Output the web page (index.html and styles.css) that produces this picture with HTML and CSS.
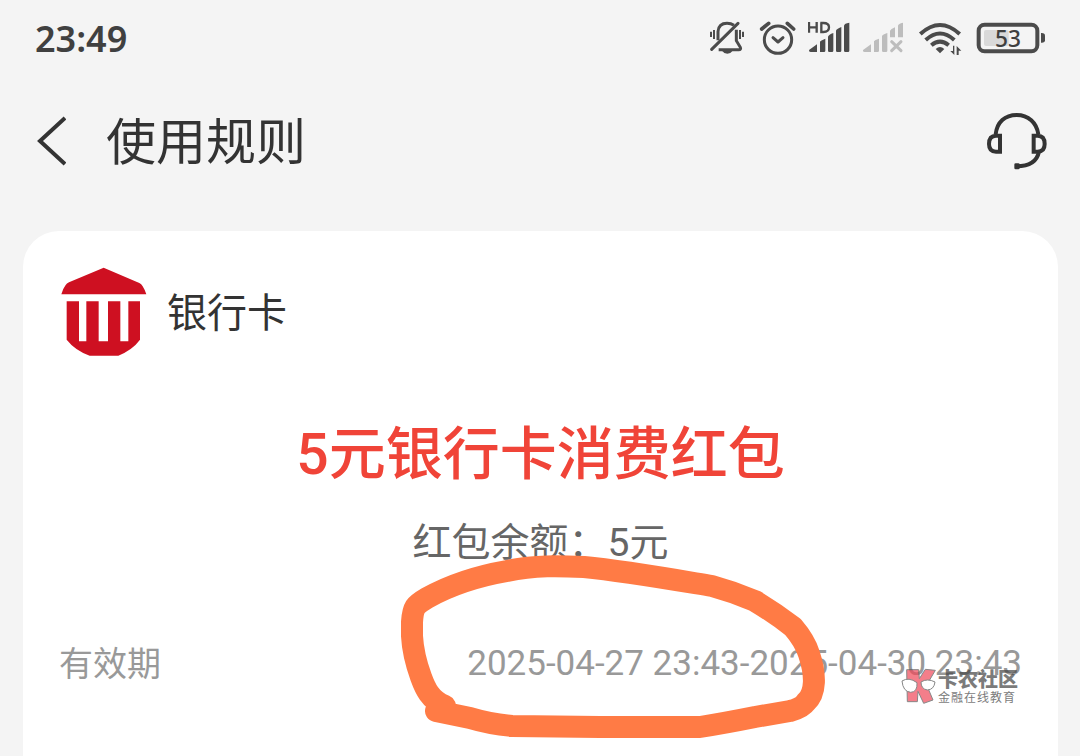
FILE: index.html
```html
<!DOCTYPE html>
<html lang="zh-CN">
<head>
    <meta charset="UTF-8">
    <meta name="viewport" content="width=device-width, initial-scale=1.0">
    <title>使用规则</title>
    <link rel="stylesheet" href="styles.css">
</head>
<body>
    <div class="status-bar">
        <span class="time">23:49</span>
        <div class="status-icons">
            <!-- Muted bell -->
            <svg width="36" height="34" viewBox="30 34 108 102" fill="none" stroke="#4b4b4b" stroke-width="9">
                <path d="M54 92V66Q56 41 81 41Q93 41 102 47M109 60V93L121 113Q124 120 116 120H56"/>
                <path d="M35 119L114 41" stroke-width="9" stroke-linecap="round"/>
                <path d="M33 66V82M42 61V88M120 61V88M129 66V82" stroke-width="6"/>
                <path d="M66 123H98Q92 132 82 132Q72 132 66 123Z" fill="#4b4b4b" stroke="none"/>
            </svg>
            <!-- Alarm -->
            <svg width="38" height="34" viewBox="174 33 114 102" fill="none" stroke="#4b4b4b" stroke-width="9" stroke-linecap="round" stroke-linejoin="round">
                <circle cx="234" cy="89" r="41"/>
                <path d="M219 83L234 96L249 83"/>
                <path d="M185 57L206 40M281 57L262 40" stroke-width="11"/>
            </svg>
            <!-- Signal -->
            <svg width="43" height="34" viewBox="324 33 129 102" fill="#4b4b4b">
                <path d="M327 120L351 103V126H332Q326 126 327 120ZM360 95Q361 92 376 86V122Q376 126 372 126H360ZM384 80Q386 74 400 69V122Q400 126 396 126H388Q384 126 384 122ZM408 62Q409 57 424 51V122Q424 126 420 126H412Q408 126 408 122ZM432 47Q433 40 448 38V122Q448 126 444 126H436Q432 126 432 122Z"/>
                <path d="M327 36V68M350 36V68M327 52H350M364 38V66H370Q387 66 387 52Q387 39 370 39H361" fill="none" stroke="#4b4b4b" stroke-width="7"/>
            </svg>
            <!-- No signal -->
            <svg width="42" height="34" viewBox="9 33 126 102" fill="#bdbdbd">
                <path d="M9 120L33 103V126H14Q8 126 9 120ZM42 94Q44 90 57 86V122Q57 126 53 126H42ZM66 78Q68 74 82 69V122Q82 126 78 126H70Q66 126 66 122ZM90 62Q92 57 105 52V82H90ZM114 47Q115 41 129 38V82H114Z"/>
                <path d="M95 95L123 122M123 95L95 122" stroke="#bdbdbd" stroke-width="9" stroke-linecap="round"/>
            </svg>
            <!-- Wifi -->
            <svg width="46" height="34" viewBox="171 33 138 102" fill="none" stroke="#4b4b4b" stroke-width="12">
                <path d="M181 72Q240 18 299 72M197 90Q240 51 283 90M214 106Q240 84 266 106"/>
                <path d="M227 117Q240 105 253 117L240 130Z" fill="#4b4b4b" stroke="none"/>
                <path d="M283 107V135L271 123H279V107ZM290 137V108L304 122H296V137Z" fill="#4b4b4b" stroke="none"/>
            </svg>
            <!-- Battery -->
            <svg width="70" height="34" viewBox="345 33 210 102">
                <rect x="356" y="44" width="176" height="80" rx="18" fill="none" stroke="#4b4b4b" stroke-width="12"/>
                <rect x="372" y="60" width="74" height="48" rx="6" fill="#d9d9d9"/>
                <path d="M543 69Q555 68 555 77V91Q555 99 543 98Z" fill="#4b4b4b"/>
                <text class="battery-level" x="444" y="110" text-anchor="middle">53</text>
            </svg>
        </div>
    </div>

    <header class="nav-bar">
        <button class="icon-button" aria-label="返回">
            <svg width="30" height="50" viewBox="0 0 30 50" fill="none" stroke="#333" stroke-width="4">
                <path d="M29 2L4 25L29 48"/>
            </svg>
        </button>
        <h1>使用规则</h1>
        <button class="icon-button" aria-label="客服">
            <svg width="60" height="58" viewBox="52 38 180 174" fill="none" stroke="#333" stroke-width="12">
                <path d="M78 105C82 68 106 47 141 47C176 47 201 70 206 105"/>
                <path d="M91 109V157H79Q58 157 58 134Q58 109 79 109ZM192 109V157H204Q225 157 225 134Q225 109 204 109Z"/>
                <path d="M208 157Q199 202 138 201"/>
                <rect x="134" y="192" width="16" height="18" rx="4" fill="#333" stroke="none"/>
            </svg>
        </button>
    </header>

    <main class="card">
        <div class="brand">
            <svg width="86" height="90" viewBox="64 52 258 270" fill="#ce1021">
                <path d="M192 54L299 100Q305 103 309 110Q316 121 320 134H65Q69 118 78 106Q81 101 88 98Z"/>
                <path d="M81 155H118V275H140V155H177V275H205V155H242V275H266V155H301V270Q279 300 236 318H150Q106 302 81 270Z"/>
            </svg>
            <span>银行卡</span>
        </div>
        <h2>5元银行卡消费红包</h2>
        <p class="balance">红包余额：5元</p>
        <dl class="validity">
            <dt>有效期</dt>
            <dd>2025-04-27 23:43-2025-04-30 23:43</dd>
        </dl>

        <!-- Hand-drawn ring round the start date -->
        <svg class="ring" width="426" height="184" viewBox="400 555 426 184" fill="none" stroke="#ff7b45" stroke-width="22" stroke-linecap="round" stroke-linejoin="round">
            <path d="M445 706C430 700 425 688 421 677Q413 655 412 636V622C413 607 415 605 427 598Q461 579 507 571C535 565 560 566 584 567C625 571 670 579 712 586Q734 592 755 601Q775 613 793 627Q805 641 809 654C816 675 816 693 806 702Q802 708 790 711L755 717Q725 723 700 727H600L512 726Q490 724 470 718L436 711"/>
        </svg>

        <div class="watermark">
            <svg width="36" height="36" viewBox="59 86 108 108">
                <path d="M76 91H112L114 118L132 90L162 93L136 137L155 182L127 192L110 156L108 187H78Z" fill="#f0485a" stroke="#555" stroke-width="3"/>
                <path d="M62 125Q82 112 107 130Q109 158 88 159Q65 157 62 125ZM119 128Q138 116 161 128Q158 151 138 152Q119 149 119 128Z" fill="#fff" stroke="#555" stroke-width="3"/>
            </svg>
            <div>
                <strong>卡农社区</strong>
                <small>金融在线教育</small>
            </div>
        </div>
    </main>
</body>
</html>
```

FILE: styles.css
```css
* {
    margin: 0;
    padding: 0;
    box-sizing: border-box;
}

body {
    background: #f4f4f4;
    color: #333;
    min-height: 100vh;
    display: flex;
    flex-direction: column;
    overflow-x: hidden;
    font-family: Roboto, "Noto Sans CJK SC", sans-serif;
}

.status-bar {
    display: flex;
    align-items: center;
    justify-content: space-between;
    height: 76px;
    padding: 0 35px;
}

.time {
    font-family: "Noto Sans", sans-serif;
    font-size: 36px;
    font-weight: 600;
    color: #404040;
}

.status-icons {
    display: flex;
    align-items: center;
    gap: 12px;
}

.battery-level {
    font-family: "Noto Sans", sans-serif;
    font-size: 68px;
    font-weight: 500;
    fill: #404040;
}

.nav-bar {
    display: flex;
    align-items: center;
    height: 130px;
    padding: 0 33px 0 36px;
}

.nav-bar h1 {
    flex: 1;
    margin-left: 40px;
    padding-top: 4px;
    font-size: 50px;
    line-height: 60px;
    font-weight: 400;
}

.icon-button {
    display: flex;
    border: none;
    background: none;
    cursor: pointer;
}

.card {
    position: relative;
    flex: 1;
    margin: 25px 22px 0 23px;
    padding: 36px;
    background: #fff;
    border-radius: 36px 36px 0 0;
}

.brand {
    display: flex;
    align-items: center;
    gap: 20px;
    padding-left: 2px;
    font-size: 40px;
    line-height: 60px;
}

.brand span {
    padding-top: 4px;
}

.card h2 {
    margin-top: 62px;
    font-size: 57px;
    line-height: 72px;
    font-weight: 500;
    text-align: center;
    color: #f04438;
}

.balance {
    margin-top: 22px;
    font-size: 39px;
    line-height: 60px;
    text-align: center;
    color: #666;
}

.validity {
    display: flex;
    justify-content: space-between;
    margin-top: 66px;
    font-size: 35px;
    line-height: 50px;
    color: #999;
}

.validity dt {
    font-size: 34px;
}

.ring {
    position: absolute;
    top: 324px;
    right: 232px;
}

.watermark {
    position: absolute;
    top: 437px;
    right: 40px;
    display: flex;
    gap: 1px;
    color: #444;
    opacity: 0.7;
}

.watermark strong,
.watermark small {
    display: block;
    font-family: "Noto Sans CJK SC", sans-serif;
}

.watermark strong {
    font-size: 20px;
    line-height: 22px;
    font-weight: 900;
}

.watermark small {
    font-size: 12px;
    line-height: 14px;
    letter-spacing: 1px;
}
```
